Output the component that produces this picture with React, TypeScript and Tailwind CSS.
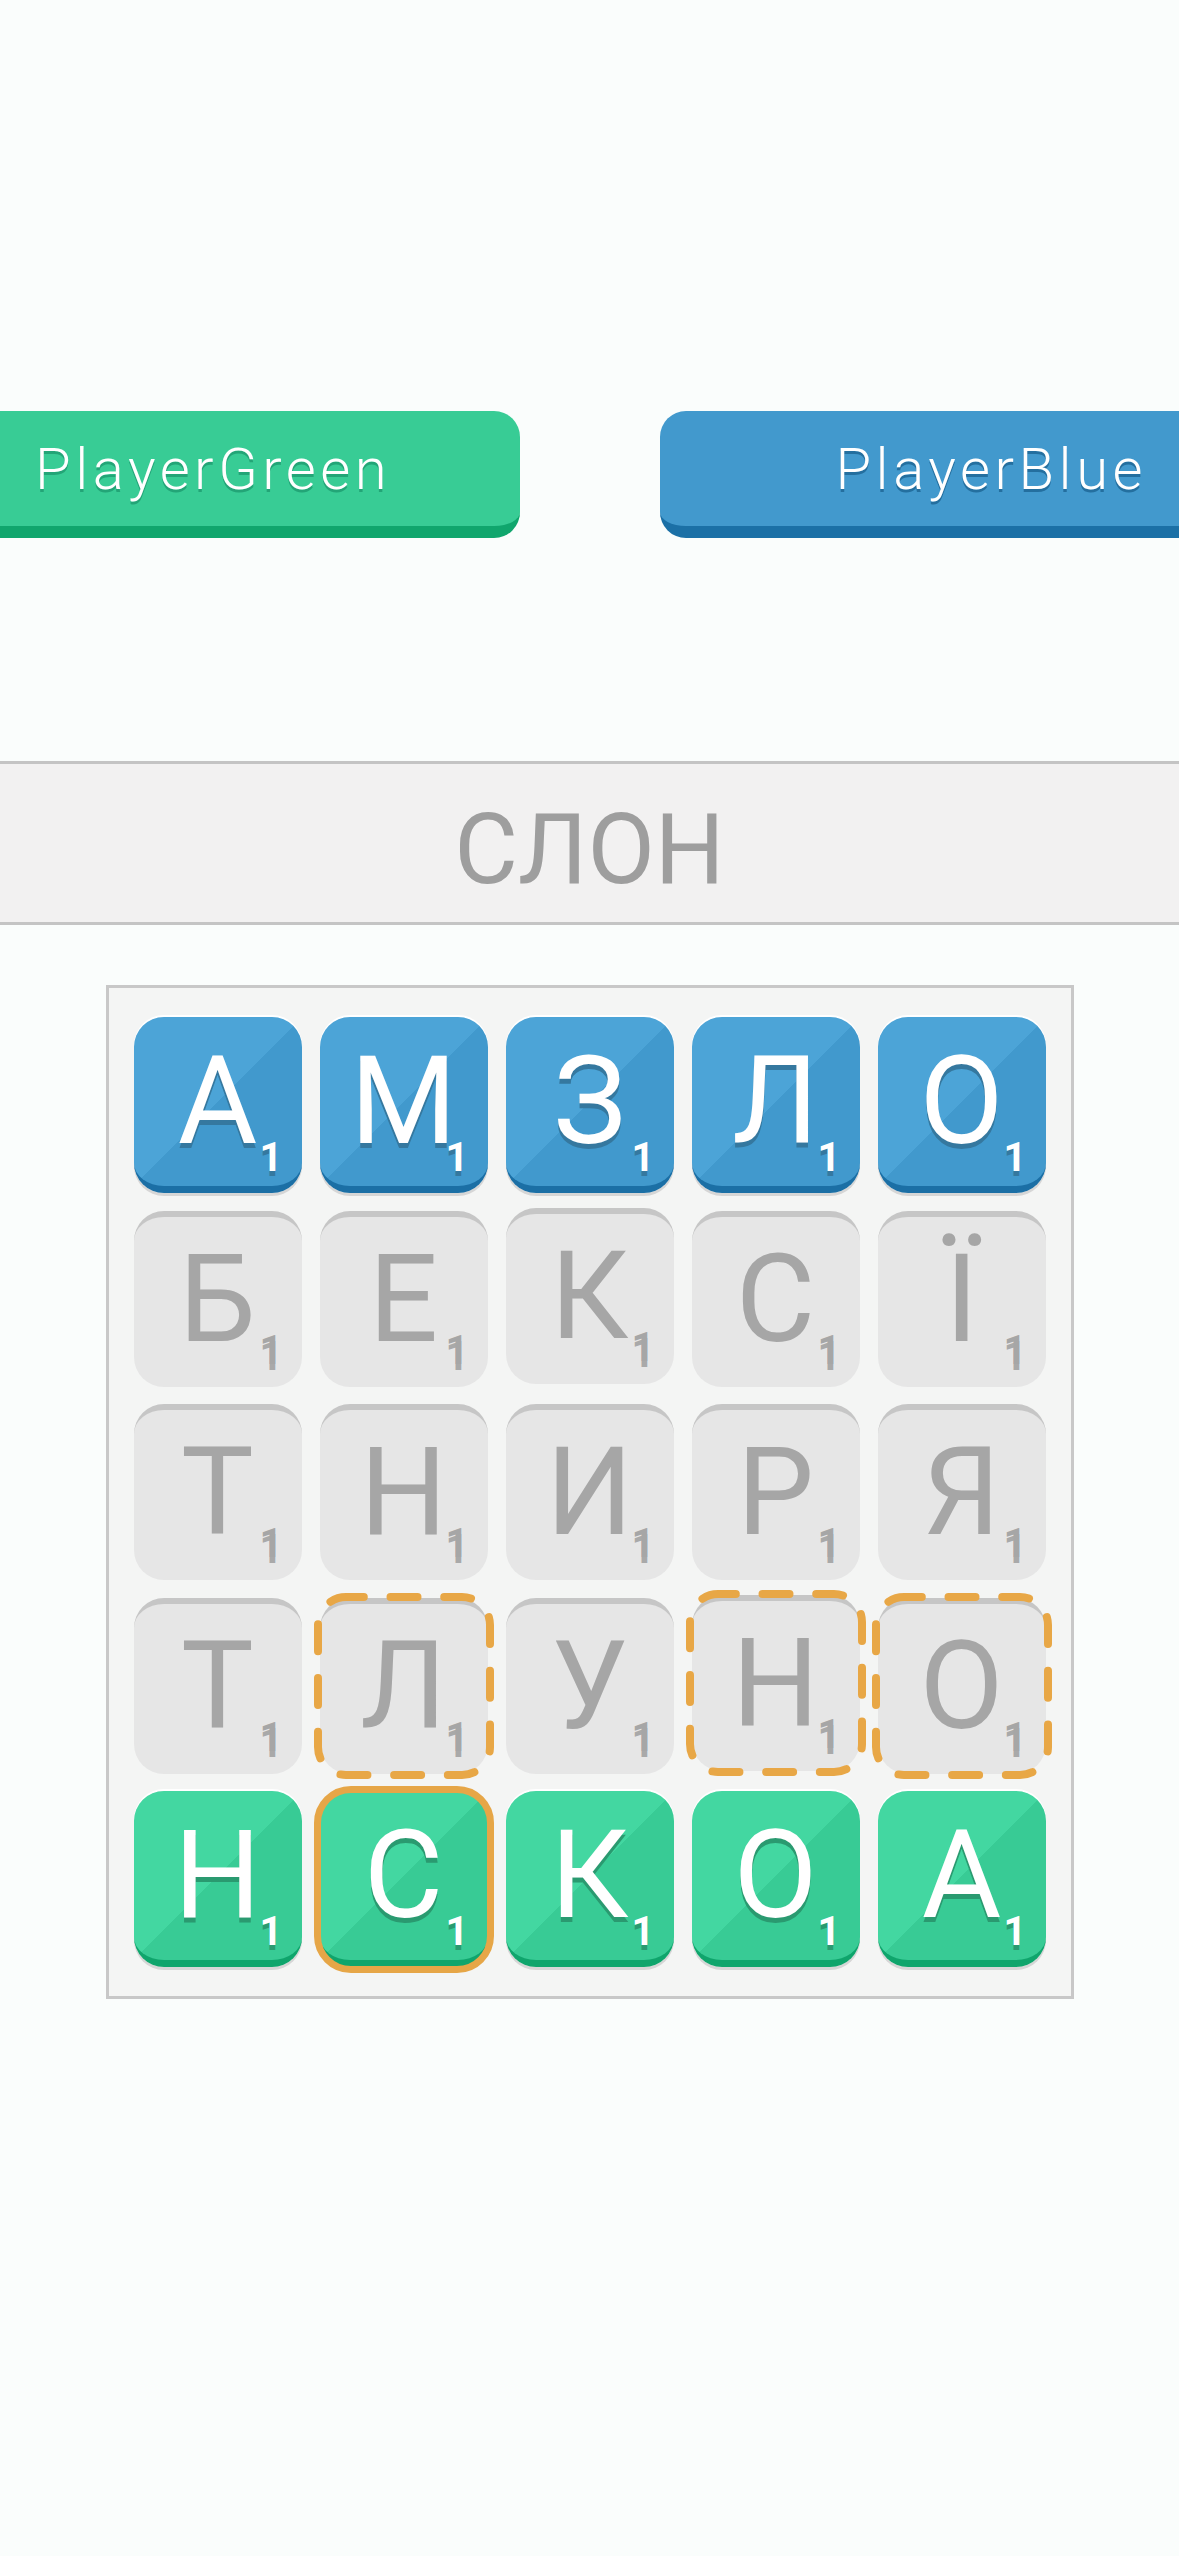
import React from 'react';

type Kind = 'blue' | 'green' | 'gray';

type Cell = {
    ch: string;
    kind: Kind;
    dashed?: boolean;
    selected?: boolean;
    lift?: boolean;
};

const rows: Cell[][] = [
    [
        { ch: 'А', kind: 'blue' },
        { ch: 'М', kind: 'blue' },
        { ch: 'З', kind: 'blue' },
        { ch: 'Л', kind: 'blue' },
        { ch: 'О', kind: 'blue' },
    ],
    [
        { ch: 'Б', kind: 'gray' },
        { ch: 'Е', kind: 'gray' },
        { ch: 'К', kind: 'gray', lift: true },
        { ch: 'С', kind: 'gray' },
        { ch: 'Ї', kind: 'gray' },
    ],
    [
        { ch: 'Т', kind: 'gray' },
        { ch: 'Н', kind: 'gray' },
        { ch: 'И', kind: 'gray' },
        { ch: 'Р', kind: 'gray' },
        { ch: 'Я', kind: 'gray' },
    ],
    [
        { ch: 'Т', kind: 'gray' },
        { ch: 'Л', kind: 'gray', dashed: true },
        { ch: 'У', kind: 'gray' },
        { ch: 'Н', kind: 'gray', dashed: true, lift: true },
        { ch: 'О', kind: 'gray', dashed: true },
    ],
    [
        { ch: 'Н', kind: 'green' },
        { ch: 'С', kind: 'green', selected: true },
        { ch: 'К', kind: 'green' },
        { ch: 'О', kind: 'green' },
        { ch: 'А', kind: 'green' },
    ],
];

// dashed selection outline, gaps sit on the corners
const DashedRing: React.FC = () => (
    <svg
        className="absolute -left-[7px] -top-[6px] pointer-events-none"
        width="182"
        height="188"
        viewBox="0 0 182 188"
        fill="none"
    >
        <rect
            x="5"
            y="5"
            width="172"
            height="178"
            rx="28"
            stroke="#e8a746"
            strokeWidth="8"
            strokeLinecap="round"
            strokeDasharray="27 26.7"
            strokeDashoffset="-44.5"
        />
    </svg>
);

const Tile: React.FC<{ cell: Cell }> = ({ cell }) => {
    if (cell.kind === 'gray') {
        return (
            <div className={`relative h-[176px] ${cell.lift ? '-translate-y-[3px]' : ''}`}>
                <div className="h-full rounded-[30px] bg-[#e6e6e6] border-t-[6px] border-[#c6c6c6] flex items-center justify-center">
                    <span className="text-[122px] leading-none text-[#a6a6a6] -mt-[4px]">{cell.ch}</span>
                </div>
                <span className="absolute right-[19px] bottom-[16px] text-[40px] font-bold leading-none text-[#a6a6a6] [text-shadow:0_6px_0_#a9a9a9]">
                    1
                </span>
                {cell.dashed && <DashedRing />}
            </div>
        );
    }

    const blue = cell.kind === 'blue';

    return (
        <div className="relative h-[176px]">
            <div
                className={`h-full rounded-[30px] border-b-[7px] flex items-center justify-center shadow-[0_3px_0_#d6d6d6,0_-2px_0_#ffffff] ${
                    blue
                        ? 'border-[#1b6fa5] bg-[linear-gradient(to_bottom_right,#4ca4d7_50%,#4199cd_50%)]'
                        : 'border-[#0fa56c] bg-[linear-gradient(to_bottom_right,#43d7a1_50%,#38cb95_50%)]'
                }`}
            >
                <span
                    className={`text-[122px] leading-none text-white ${
                        blue ? '[text-shadow:0_5px_0_#35789f]' : '[text-shadow:0_5px_0_#2a9a70]'
                    }`}
                >
                    {cell.ch}
                </span>
            </div>
            <span
                className={`absolute right-[19px] bottom-[15px] text-[40px] font-bold leading-none text-white ${
                    blue ? '[text-shadow:0_5px_0_#35789f]' : '[text-shadow:0_5px_0_#2a9a70]'
                }`}
            >
                1
            </span>
            {cell.selected && (
                <div className="absolute -left-[6px] -right-[6px] -top-[5px] -bottom-[6px] rounded-[37px] border-[7px] border-[#e6a647] pointer-events-none"></div>
            )}
        </div>
    );
};

const App: React.FC = () => {
    return (
        <div className="min-h-[2556px] bg-[#fafdfc] font-[Roboto,sans-serif] overflow-hidden">

            {/* Players */}
            <div className="pt-[411px] flex justify-between">
                <div className="w-[520px] h-[127px] rounded-r-[26px] bg-[#38cc95] border-b-[12px] border-[#10a66d] pl-[35px] flex items-center">
                    <span className="text-[58px] font-light tracking-[4.5px] leading-none text-white [text-shadow:0_3px_0_#23a577]">
                        PlayerGreen
                    </span>
                </div>
                <div className="w-[519px] h-[127px] rounded-l-[26px] bg-[#4299cd] border-b-[12px] border-[#1b70a6] pr-[32px] flex items-center justify-end">
                    <span className="text-[58px] font-light tracking-[4.5px] leading-none text-white [text-shadow:0_3px_0_#246f9f]">
                        PlayerBlue
                    </span>
                </div>
            </div>

            {/* Current word */}
            <div className="mt-[223px] h-[164px] border-y-[3px] border-[#c4c4c4] bg-[#f2f1f1] flex items-center justify-center">
                <span className="text-[98px] leading-none text-[#9e9e9e] pt-[14px]">СЛОН</span>
            </div>

            {/* Board */}
            <div className="mt-[60px] mx-auto w-[968px] border-[3px] border-[#c8c8c8] bg-[#f4f5f4] px-[25px] py-[29px]">
                <div className="grid grid-cols-5 gap-x-[18px] gap-y-[17.5px]">
                    {rows.map((row, rIdx) =>
                        row.map((cell, cIdx) => <Tile key={`${rIdx}-${cIdx}`} cell={cell} />)
                    )}
                </div>
            </div>

        </div>
    );
};

export default App;
